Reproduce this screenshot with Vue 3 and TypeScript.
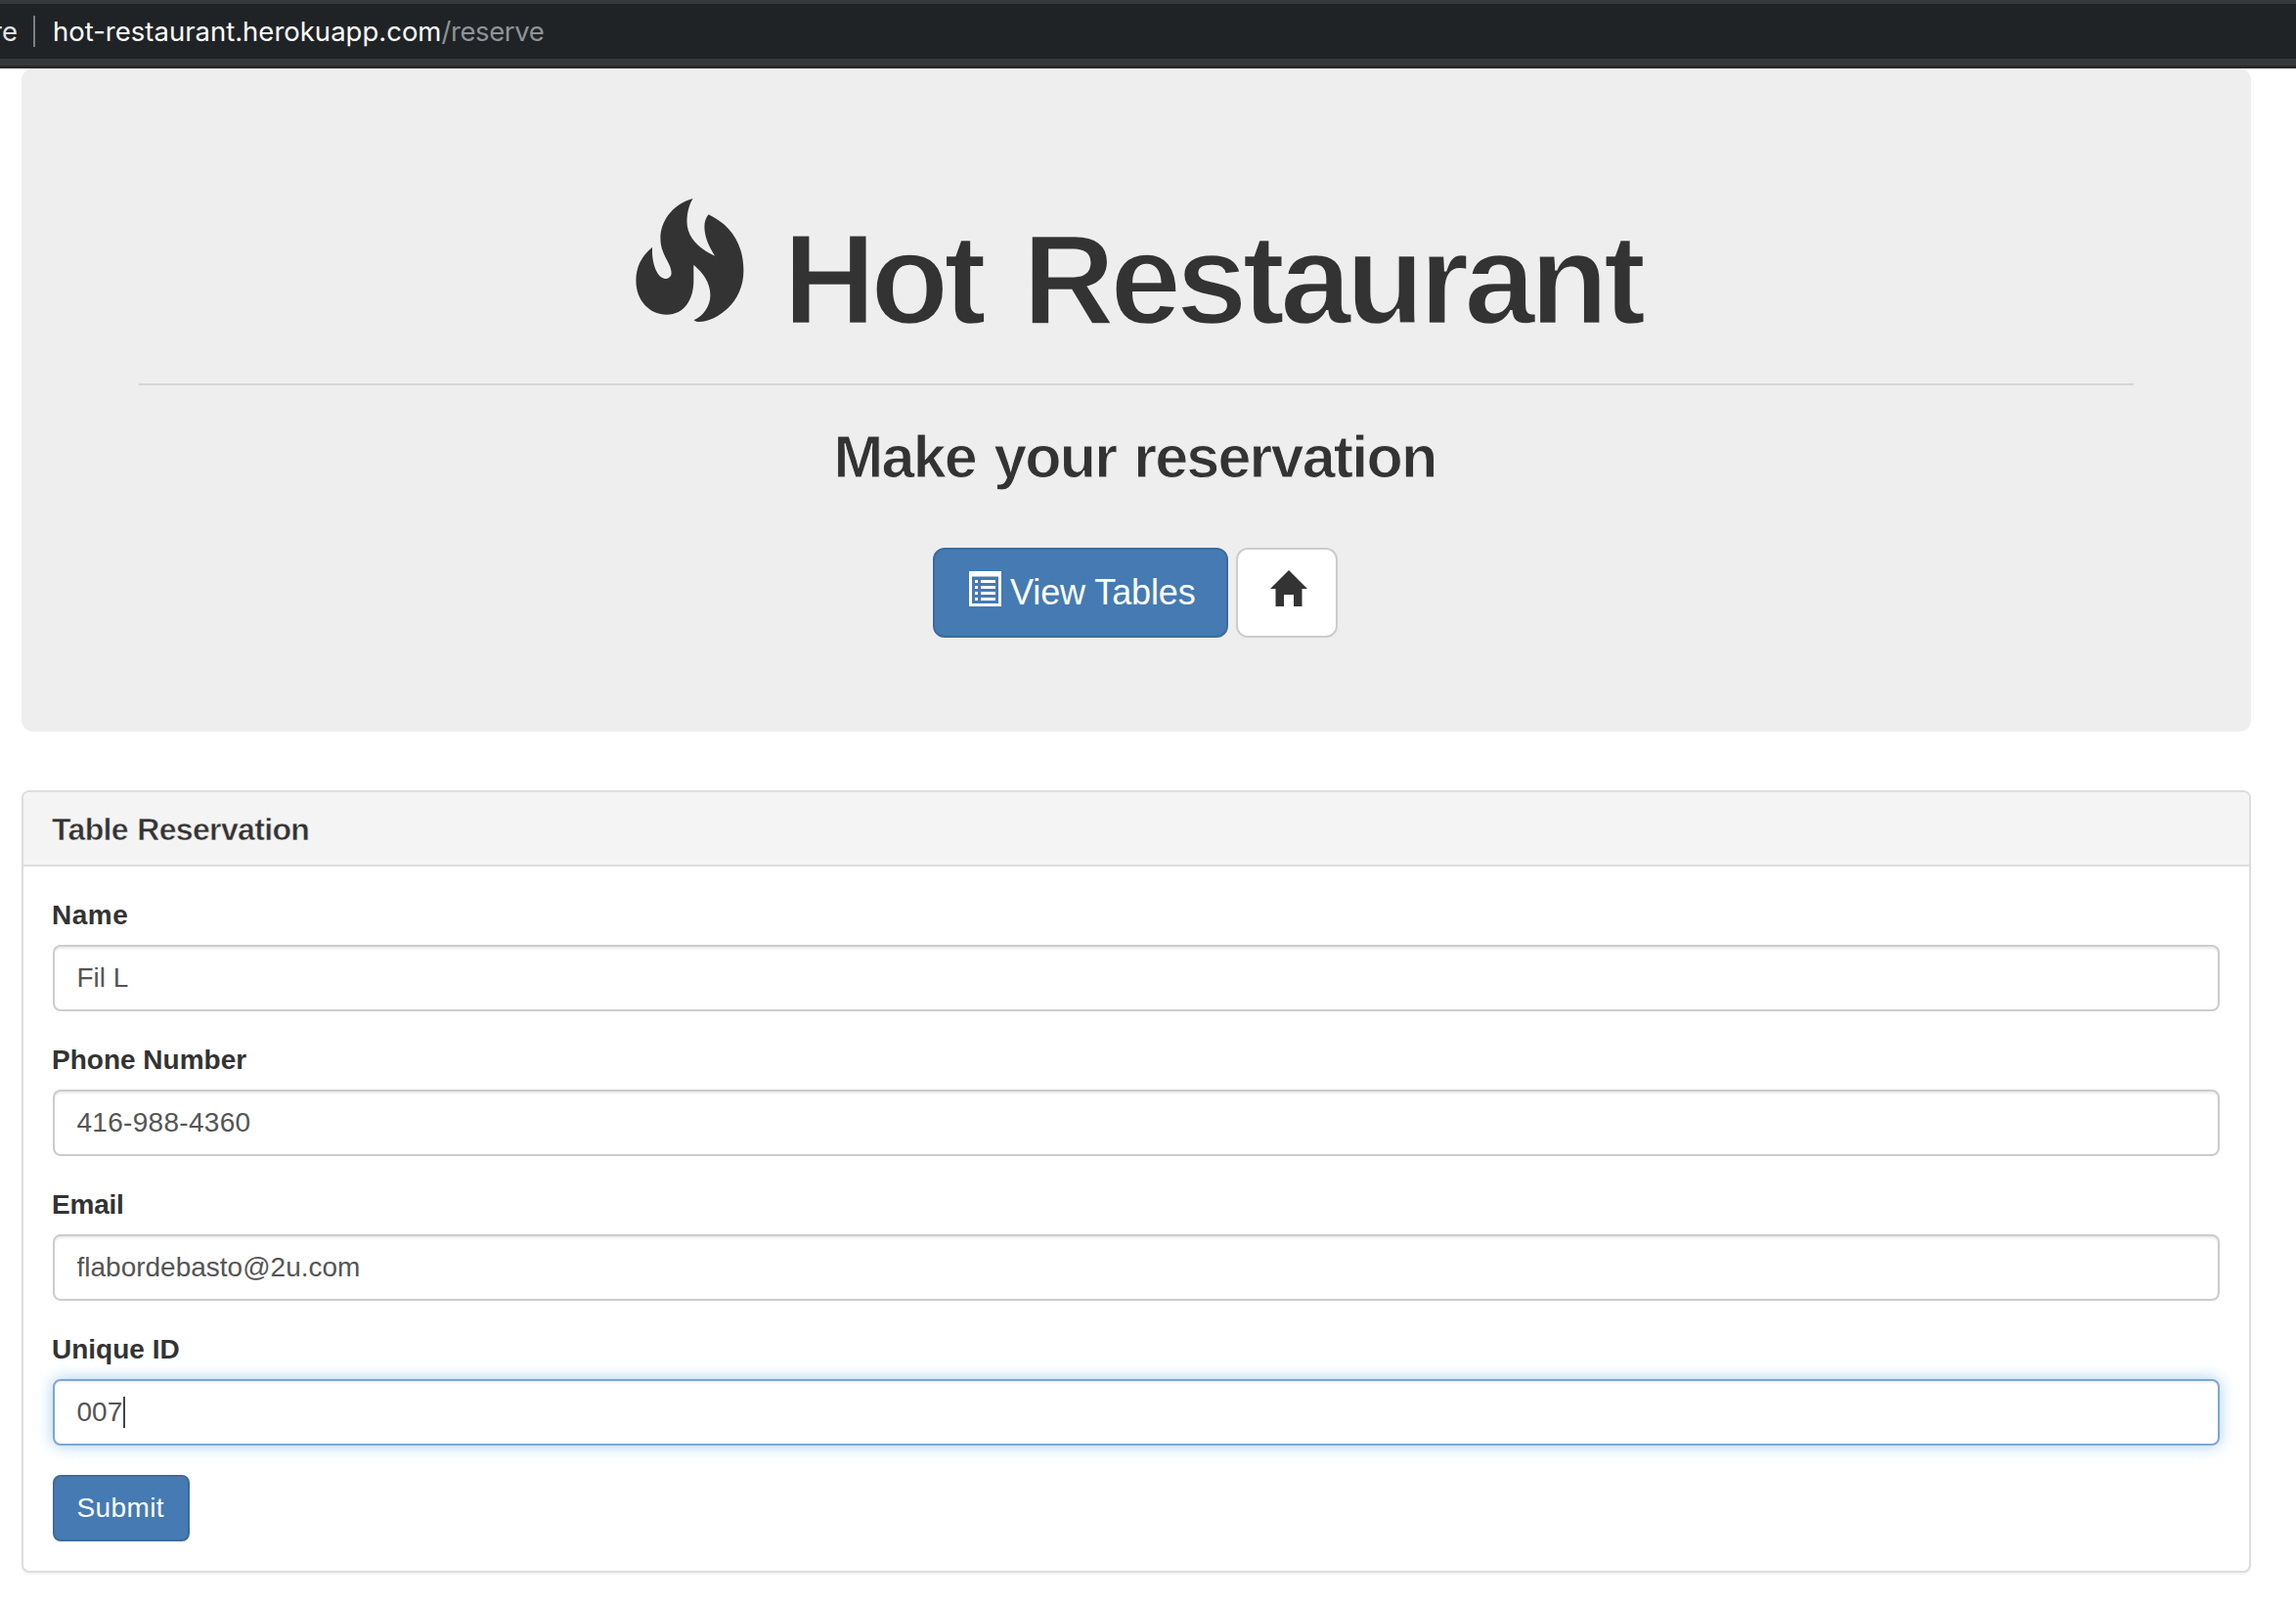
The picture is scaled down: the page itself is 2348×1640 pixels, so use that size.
<script setup lang="ts">
import { ref } from 'vue'

interface Field {
  id: string
  label: string
  value: string
  active?: boolean
}

const fields = ref<Field[]>([
  { id: 'name', label: 'Name', value: 'Fil L' },
  { id: 'phone', label: 'Phone Number', value: '416-988-4360' },
  { id: 'email', label: 'Email', value: 'flabordebasto@2u.com' },
  { id: 'unique', label: 'Unique ID', value: '007', active: true },
])
</script>

<template>
  <div class="window">
    <header class="toolbar">
      <div class="omnibox">
        <span class="secure">re</span>
        <span class="divider"></span>
        <span class="host">hot-restaurant.herokuapp.com</span><span class="path">/reserve</span>
      </div>
    </header>

    <main class="container">
      <section class="jumbotron">
        <h1>
          <svg class="fire" viewBox="0 0 126 126" aria-hidden="true">
            <path d="M65.6 0C44 6 32.4 24 32.4 40.5C32.4 58 43.6 66 43.6 76C43.6 80 40.5 82 37 82C29 81 23 66 24.1 49.7C13 59 7.4 70 7.4 84C7.4 105 22 118.7 38.8 118.7C57 118.7 66.3 103 66.3 84V67.7C76 76 83.4 86 83.4 98.7C83.4 110 76 120.5 66.6 124.3C68 125.7 70 126 72.5 126C90 125 117.4 107 117.4 73.7C117.4 46 104 27 81.6 16.3C79 19 77.4 24 77.4 28.7C77.4 41 84 52 88.1 58.7C73 52 59.5 40 59.5 23.7C59.5 14 62 6 65.6 0Z" />
          </svg>
          <span>Hot Restaurant</span>
        </h1>
        <hr />
        <h2>Make your reservation</h2>
        <div class="actions">
          <a class="btn btn-primary btn-lg">
            <svg class="list" viewBox="0 0 33 36" aria-hidden="true">
              <path fill-rule="evenodd" d="M0 0H33V36H0ZM3 5.5V33H30V5.5Z" />
              <path d="M6 9h3v3H6zM12 9h15v3H12zM6 15h3v3H6zM12 15h15v3H12zM6 21h3v3H6zM12 21h15v3H12zM6 27h3v3H6zM12 27h15v3H12z" />
            </svg>
            <span>View Tables</span>
          </a>
          <a class="btn btn-default btn-lg" aria-label="Home">
            <svg class="home" viewBox="0 0 38 37" aria-hidden="true">
              <path d="M19 0L38 19H32.5V37H24V25H14V37H5.5V19H0Z" />
            </svg>
          </a>
        </div>
      </section>

      <section class="panel">
        <div class="panel-heading"><h3>Table Reservation</h3></div>
        <form class="panel-body" @submit.prevent>
          <div v-for="field in fields" :key="field.id" class="form-group">
            <label :for="field.id" :class="'label-' + field.id">{{ field.label }}</label>
            <div class="control">
              <input
                :id="field.id"
                v-model="field.value"
                type="text"
                :class="['input-' + field.id, { active: field.active }]"
              />
              <span v-if="field.active" class="caret"></span>
            </div>
          </div>
          <button type="submit" class="btn btn-primary submit">Submit</button>
        </form>
      </section>
    </main>
  </div>
</template>

<style>
body {
  margin: 0;
  background: #fff;
}
</style>

<style scoped>
* {
  box-sizing: border-box;
}
.window {
  height: 1640px;
  overflow: hidden;
  background: #fff;
  color: #333;
  font: 28px/40px "Liberation Sans", Arial, sans-serif;
}
.toolbar {
  height: 70px;
  padding-top: 4px;
  background: linear-gradient(#35393c 0 65px, #3a3838 65px 67px, #292828 67px 70px);
}
.omnibox {
  display: flex;
  align-items: center;
  height: 56px;
  background: #202326;
  font-family: Inter, Roboto, sans-serif;
  font-size: 27.5px;
  white-space: pre;
}
.secure {
  width: 34px;
  margin-left: -8px;
  color: #e4e6e8;
}
.divider {
  width: 2px;
  height: 32px;
  margin: 0 18px 0 8px;
  background: #7b7e82;
}
.host {
  color: #fff;
}
.path {
  color: #8f9396;
  letter-spacing: -0.4px;
}
.container {
  width: 2280px;
  margin-left: 22px;
}
.jumbotron {
  height: 678px;
  padding: 51px 120px 96px;
  border-radius: 12px;
  background: #eee;
  text-align: center;
}
h1,
h2,
h3 {
  margin: 0;
  font-weight: 700;
}
/* A hairline in the background colour trims bold down to a medium weight. */
h1 {
  display: flex;
  justify-content: center;
  height: 139px;
  margin-top: 96px;
  font-size: 131px;
  line-height: 138px;
  letter-spacing: -5.2px;
  word-spacing: 11px;
  white-space: nowrap;
  -webkit-text-stroke: 2.4px #eee;
}
h1 span {
  margin-right: 3px;
}
.fire {
  flex: none;
  width: 126px;
  height: 126px;
  margin: -14px 32px 0 0;
  fill: #333;
  stroke: none;
}
hr {
  height: 2px;
  margin: 36px 0 40px;
  border: 0;
  background: #d5d5d5;
}
h2 {
  margin-right: 3px;
  font-size: 61px;
  line-height: 66px;
  letter-spacing: -1.8px;
  word-spacing: 3px;
  -webkit-text-stroke: 1px #eee;
}
.actions {
  display: flex;
  justify-content: center;
  gap: 8px;
  margin: 60px 2px 0 0;
}
.btn {
  display: flex;
  align-items: center;
  border: 2px solid transparent;
  border-radius: 8px;
  font: inherit;
}
.btn-primary {
  border-color: #3d6b9b;
  background: #457ab3;
  color: #fff;
}
.btn-default {
  border-color: #ccc;
  background: #fff;
  color: #333;
}
.btn-lg {
  height: 92px;
  border-radius: 12px;
  font-size: 36px;
  letter-spacing: -0.1px;
}
.btn-primary.btn-lg {
  width: 302px;
  padding-left: 35px;
}
.btn-default.btn-lg {
  width: 104px;
  padding-left: 33px;
}
.btn svg {
  fill: currentColor;
}
.list {
  width: 33px;
  height: 36px;
  margin: -8px 9px 0 0;
}
.home {
  width: 38px;
  height: 37px;
  margin-top: -9px;
}
.panel {
  height: 800px;
  margin-top: 60px;
  border: 2px solid #ddd;
  border-radius: 8px;
  background: #fff;
  box-shadow: 0 2px 2px rgba(0, 0, 0, 0.05);
}
.panel-heading {
  height: 76px;
  padding: 20px 29px;
  border-bottom: 2px solid #ddd;
  border-radius: 6px 6px 0 0;
  background: #f4f4f4;
}
h3 {
  font-size: 32px;
  line-height: 36px;
  letter-spacing: -0.65px;
  word-spacing: 1px;
  -webkit-text-stroke: 0.5px #f4f4f4;
}
.panel-body {
  padding: 30px;
}
.form-group {
  margin-bottom: 30px;
}
label {
  display: block;
  margin: 0 0 10px -1px;
  font-weight: 700;
}
.label-name {
  letter-spacing: 0.5px;
}
.label-email {
  letter-spacing: -0.2px;
}
.control {
  position: relative;
}
input {
  display: block;
  width: 100%;
  height: 68px;
  padding: 0 22.5px;
  border: 2px solid #ccc;
  border-radius: 8px;
  outline: none;
  background: #fff;
  box-shadow: inset 0 2px 2px rgba(0, 0, 0, 0.075);
  color: #555;
  font: inherit;
}
.input-phone {
  letter-spacing: 0.3px;
}
input.active {
  border-color: #7fa6d1;
  box-shadow: inset 0 2px 2px rgba(0, 0, 0, 0.05), 0 0 16px rgba(102, 175, 233, 0.6);
}
.caret {
  position: absolute;
  top: 18px;
  left: 72px;
  width: 2px;
  height: 32px;
  background: #444;
}
.submit {
  width: 140px;
  height: 68px;
  padding: 0 22.5px;
  letter-spacing: 0.4px;
}
</style>
